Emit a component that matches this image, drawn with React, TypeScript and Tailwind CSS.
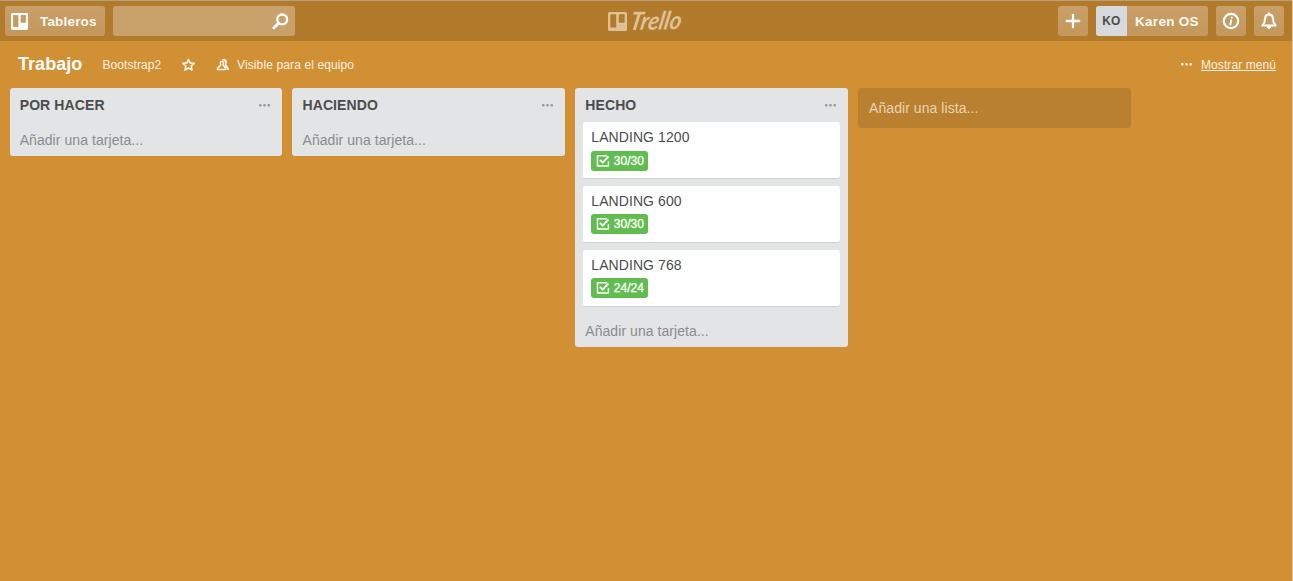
import type { ReactNode } from "react";

type Card = { title: string; done: string };
type List = { name: string; cards: Card[] };

const lists: List[] = [
  { name: "POR HACER", cards: [] },
  { name: "HACIENDO", cards: [] },
  {
    name: "HECHO",
    cards: [
      { title: "LANDING 1200", done: "30/30" },
      { title: "LANDING 600", done: "30/30" },
      { title: "LANDING 768", done: "24/24" },
    ],
  },
];

function BoardIcon({ className }: { className: string }) {
  return (
    <svg viewBox="0 0 18 18" className={className} fill="currentColor" fillRule="evenodd">
      <path d="M1.500 0h15A1.500 1.500 0 0 1 18 1.500v15a1.500 1.500 0 0 1-1.500 1.500h-15A1.500 1.500 0 0 1 0 16.500v-15A1.500 1.500 0 0 1 1.500 0zM3 2.200a.8.8 0 0 0-.8.8v11a.8.8 0 0 0 .8.8h4a.8.8 0 0 0 .8-.8V3a.8.8 0 0 0-.8-.8zM11 2.200a.8.8 0 0 0-.8.8v6.500a.8.8 0 0 0 .8.8h4a.8.8 0 0 0 .8-.8V3a.8.8 0 0 0-.8-.8z" />
    </svg>
  );
}

function Dots({ className }: { className: string }) {
  return (
    <svg viewBox="0 0 11 3" className={className} fill="currentColor">
      <rect x="0" y="0.100" width="2.600" height="2.300" rx="0.900" />
      <rect x="4.200" y="0.100" width="2.600" height="2.300" rx="0.900" />
      <rect x="8.400" y="0.100" width="2.600" height="2.300" rx="0.900" />
    </svg>
  );
}

function HeaderButton({ children, className }: { children: ReactNode; className: string }) {
  return (
    <button
      className={`flex h-[30px] shrink-0 items-center rounded-[3px] bg-linear-to-b from-[#c9a069] to-[#c4975b] text-white ${className}`}
    >
      {children}
    </button>
  );
}

function Header() {
  return (
    <header className="flex h-[41px] shrink-0 items-center border-t border-[#b8a07d] bg-[#b27b2c] pr-[8.500px] pl-[5px]">
      <HeaderButton className="w-[99.500px] pl-[6px]">
        <BoardIcon className="size-[17px]" />
        <span className="ml-[12px] pt-[2px] text-[13.500px] font-bold tracking-[0.180px] text-[#fdf8f0]">Tableros</span>
      </HeaderButton>
      <div className="ml-[8px] flex h-[30px] w-[182px] items-center justify-end rounded-[3px] bg-[#c9a26b] pr-[6px]">
        <svg viewBox="0 0 17 17" className="size-[17px]" fill="none" stroke="#fff" strokeLinecap="round">
          <circle cx="10.200" cy="6.400" r="4.900" strokeWidth="2.300" />
          <path d="M6.600 10.200 1.900 14.800" strokeWidth="2.900" />
        </svg>
      </div>
      <div className="ml-[313.500px] flex items-center text-[#dec196]">
        <BoardIcon className="size-[19px]" />
        <svg viewBox="0 0 64 40" className="h-[40px] w-[64px] overflow-visible" fill="currentColor">
          <text
            x="0"
            y="0"
            transform="translate(2 29) rotate(-1) skewX(-12)"
            textLength="51"
            lengthAdjust="spacingAndGlyphs"
            className="font-[Lato,sans-serif] text-[25px] font-bold italic"
          >
            Trello
          </text>
        </svg>
      </div>
      <div className="ml-auto flex items-center gap-[8px]">
        <HeaderButton className="w-[30px] justify-center">
          <svg viewBox="0 0 16 16" className="size-[16px]" fill="none" stroke="currentColor" strokeWidth="2.300" strokeLinecap="round">
            <path d="M8 1.800v12.400M1.800 8h12.400" />
          </svg>
        </HeaderButton>
        <HeaderButton className="w-[111.500px] overflow-hidden">
          <span className="flex h-full w-[30.500px] items-center justify-center bg-[#d6dadc] text-[12px] font-bold text-[#4d4d4d]">
            KO
          </span>
          <span className="ml-[8.500px] pt-[2px] text-[13.500px] font-bold tracking-[0.300px] whitespace-nowrap text-[#fdf8f0]">
            Karen OS
          </span>
        </HeaderButton>
        <HeaderButton className="w-[30px] justify-center">
          <svg viewBox="0 0 18 18" className="size-[18px]" fill="none" stroke="currentColor">
            <circle cx="9" cy="9" r="7.200" strokeWidth="2.200" />
            <path d="M9.200 8.200 8.300 12.500" strokeWidth="1.900" strokeLinecap="round" />
            <circle cx="9.700" cy="5.600" r="1.100" fill="currentColor" stroke="none" />
          </svg>
        </HeaderButton>
        <HeaderButton className="w-[30px] justify-center">
          <svg viewBox="0 0 18 18" className="size-[18px]" fill="none" stroke="currentColor" strokeWidth="2" strokeLinejoin="round">
            <path d="M9 2.500C6.400 2.500 5.200 4.300 5.100 6.600 5 9.800 4.400 11.500 2.300 13.600H15.700C13.600 11.500 13 9.800 12.900 6.600 12.800 4.300 11.600 2.500 9 2.500z" />
            <path d="M7.300 14.600a1.700 1.900 0 0 0 3.400 0z" fill="currentColor" strokeWidth="1" />
            <path d="M9 1.200v1.200" strokeLinecap="round" />
          </svg>
        </HeaderButton>
      </div>
    </header>
  );
}

function BoardBar() {
  return (
    <div className="flex h-[46.600px] shrink-0 items-center pt-[0.800px] pr-[16px] pl-[18px] text-[12px] whitespace-nowrap text-[#fbf1e2]">
      <h1 className="w-[84.500px] text-[18px] font-bold tracking-[0.050px] text-white">Trabajo</h1>
      <span className="w-[79px] tracking-[0.080px]">Bootstrap2</span>
      <svg viewBox="0 0 14 14" className="size-[14px]" fill="none" stroke="currentColor" strokeWidth="1.700" strokeLinejoin="round">
        <path d="m6.500 1.500 1.600 3.300 4.100.5-3 2.700.7 4-3.400-1.900-3.400 1.900.7-4L.9 5.300 4.900 4.800z" />
      </svg>
      <svg viewBox="0 0 14 14" className="ml-[20px] size-[14px]" fill="none" stroke="currentColor" strokeWidth="1.500" strokeLinejoin="round">
        <path d="M5.800 3.400c-1.200 0-1.700.8-1.600 1.800.1.900.6 1.300.4 2C4.300 8.200 1.600 8.600 1.300 11.600h8.600C9.600 8.600 7.400 8.200 7.100 7.200c-.2-.7.3-1.100.4-2 .1-1-.5-1.800-1.700-1.800z" />
        <path d="M5.400 2.200C6 1.200 7 .9 8 .9c2.200 0 3.200 1.400 3 3.100-.1 1.300-.9 1.900-.5 2.700.5 1 2.400 1.900 2.600 5.400h-2.200c-.2-2.400-1.500-3.500-2.700-4.400.6-.8.900-1.600.8-2.700-.1-1.800-1.500-3-3.600-2.800z" fill="currentColor" stroke="none" />
      </svg>
      <span className="ml-[7.500px] tracking-[0.120px]">Visible para el equipo</span>
      <Dots className="ml-auto h-[3px] w-[11px]" />
      <a href="#" className="ml-[9px] tracking-[0.080px] underline">
        Mostrar menú
      </a>
    </div>
  );
}

function CardTile({ card }: { card: Card }) {
  return (
    <article className="flex h-[57px] flex-col items-start rounded-[3px] border-b border-[#d0d1d2] bg-white pt-[6px] pl-[8px]">
      <h3 className="text-[14px] leading-[18px] tracking-[0.080px] text-[#4d4d4d]">{card.title}</h3>
      <span className="mt-[4.400px] flex h-[20px] w-[57px] items-center rounded-[3px] bg-[#61bd4f] pl-[4.500px] text-white">
        <svg viewBox="0 0 14 14" className="size-[14px]" fill="none" stroke="currentColor" strokeWidth="1.500" strokeLinejoin="round">
          <path d="M12.400 7.200v4.900H1.500V1.700h9.400" />
          <path d="m4 5.800 2.700 2.900L12.400 2.500" strokeWidth="1.900" />
        </svg>
        <span className="ml-[4px] text-[12px] [-webkit-text-stroke:0.300px_white]">{card.done}</span>
      </span>
    </article>
  );
}

function ListColumn({ list }: { list: List }) {
  const filled = list.cards.length > 0;
  return (
    <section className="w-[272.800px] shrink-0 rounded-[3px] bg-[#e2e4e6]">
      <div className="flex h-[34.700px] items-center justify-between pt-[0.800px] pr-[12px] pl-[10px]">
        <h2 className="text-[14px] font-bold tracking-[0.100px] text-[#4d4d4d]">{list.name}</h2>
        <Dots className="h-[3px] w-[11px] text-[#999]" />
      </div>
      {filled && (
        <div className="flex flex-col gap-[6.700px] px-[8px]">
          {list.cards.map((card) => (
            <CardTile key={card.title} card={card} />
          ))}
        </div>
      )}
      <div
        className={`flex h-[34px] items-center pl-[10px] text-[14px] tracking-[0.060px] text-[#8c8c8c] ${filled ? "mt-[6.800px] pt-[2px]" : "pt-[2px]"}`}
      >
        Añadir una tarjeta...
      </div>
    </section>
  );
}

export default function App() {
  return (
    <div className="flex h-screen flex-col overflow-hidden border-r border-[#dcc6a3] bg-[#d29034] font-['Liberation_Sans',Arial,sans-serif]">
      <Header />
      <BoardBar />
      <main className="flex items-start gap-[10px] pl-[9.700px]">
        {lists.map((list) => (
          <ListColumn key={list.name} list={list} />
        ))}
        <button className="flex h-[40px] w-[272.800px] shrink-0 items-center rounded-[3px] bg-[#b9802f] pt-px pl-[11px] text-[14px] tracking-[0.060px] text-[#ead4b3]">
          Añadir una lista...
        </button>
      </main>
    </div>
  );
}
